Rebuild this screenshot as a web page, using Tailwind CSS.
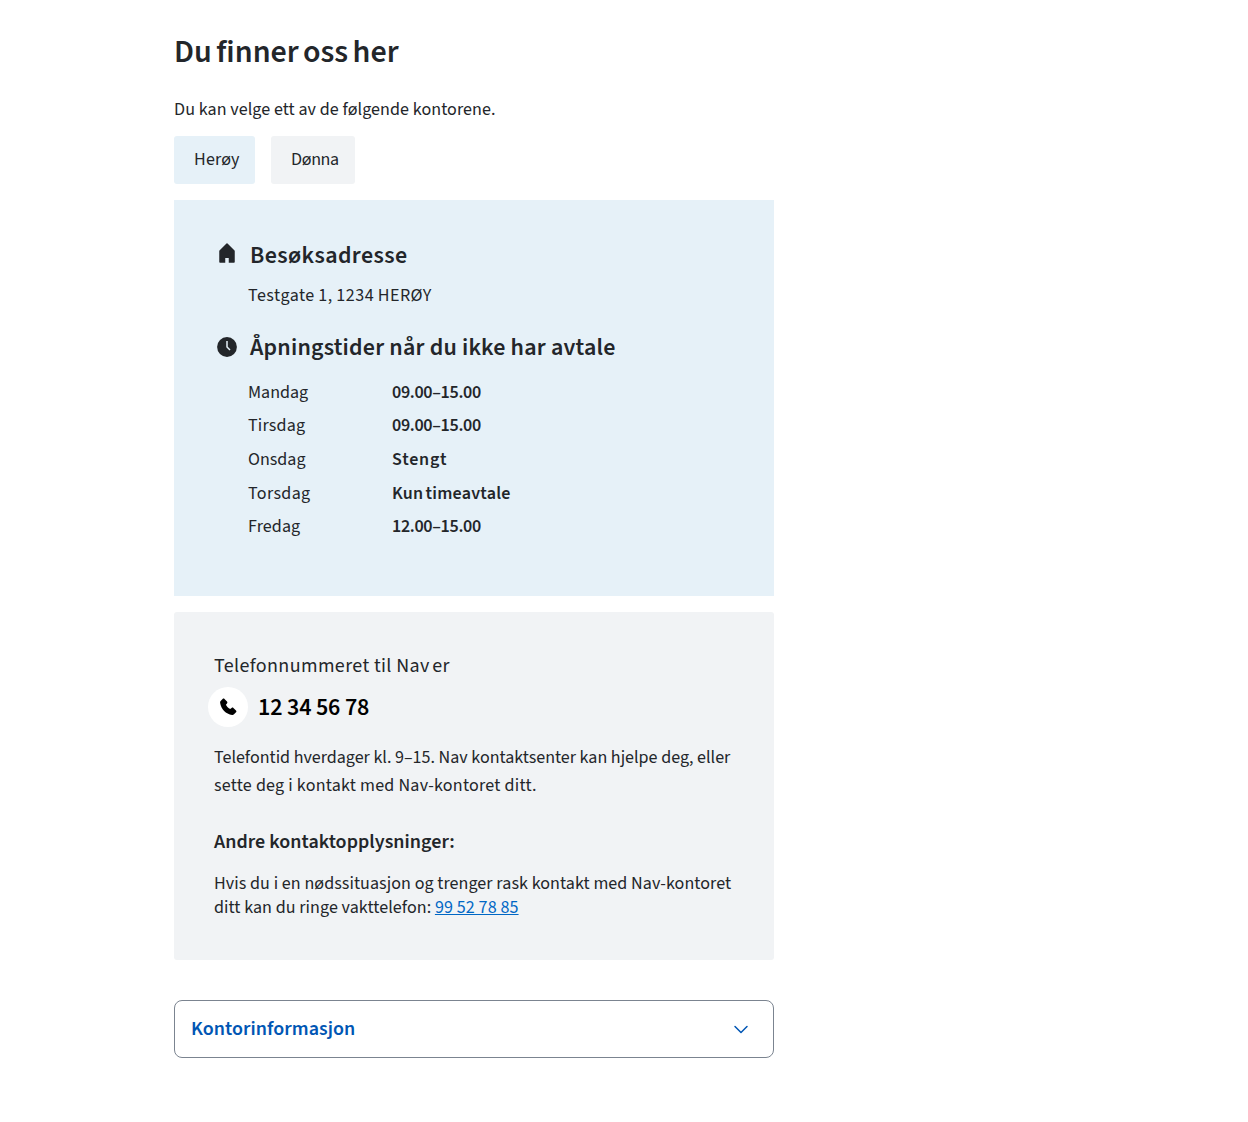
<!DOCTYPE html>
<html lang="no">
<head>
<meta charset="utf-8">
<title>Du finner oss her</title>
<script src="https://cdn.jsdelivr.net/npm/@tailwindcss/browser@4"></script>
</head>
<body class="bg-white text-[#23262a] font-['Source_Sans_3','Noto_Sans_CJK_SC',sans-serif] text-[18px] leading-6">
<main class="ml-[174px] w-[600px] pt-8">
  <h1 class="text-[32px] leading-10 font-semibold [word-spacing:-2px]">Du finner oss her</h1>
  <p class="mt-[26px] tracking-[0.08px]">Du kan velge ett av de følgende kontorene.</p>
  <div class="mt-[14px] flex gap-4">
    <button class="h-12 w-[81px] rounded-[3px] bg-[#e6f1f8] pl-5 text-left tracking-[0.15px]">Herøy</button>
    <button class="h-12 w-[84px] rounded-[3px] bg-[#f1f3f5] pl-5 text-left tracking-[-0.35px]">Dønna</button>
  </div>

  <section class="mt-4 h-[396px] bg-[#e6f1f8] px-10 pt-9">
    <h2 class="flex h-9 items-center text-[24px] font-semibold">
      <svg class="mx-px mr-[11px] -mt-0.5 size-6" viewBox="0 0 24 24" fill="currentColor"><path d="M12.53 2.47a.75.75 0 0 0-1.06 0l-7 7a.75.75 0 0 0-.22.53v11c0 .41.34.75.75.75h5.25V17h3.5v4.75H19c.41 0 .75-.34.75-.75V10a.75.75 0 0 0-.22-.53z"/></svg>
      <span class="pt-1 tracking-[0.38px]">Besøksadresse</span>
    </h2>
    <p class="mt-3 pl-[34px] tracking-[0.49px] [word-spacing:-0.5px]">Testgate 1, 1234 HERØY</p>
    <h2 class="mt-5 flex h-9 items-center text-[24px] font-semibold">
      <svg class="mx-px mr-[11px] mt-0.5 size-6" viewBox="0 0 24 24"><circle cx="12" cy="12" r="9.9" fill="currentColor"/><path d="M12 6v6l3 3" fill="none" stroke="#e6f1f8" stroke-width="1.5"/></svg>
      <span class="pt-1 tracking-[0.19px]">Åpningstider når du ikke har avtale</span>
    </h2>
    <dl class="mt-3 grid grid-cols-[144px_1fr] auto-rows-[33.6px] items-center pl-[34px] [&_dd]:font-semibold">
      <dt>Mandag</dt><dd class="tracking-[-0.32px]">09.00–15.00</dd>
      <dt class="tracking-[0.2px]">Tirsdag</dt><dd class="tracking-[-0.32px]">09.00–15.00</dd>
      <dt>Onsdag</dt><dd class="tracking-[0.8px]">Stengt</dd>
      <dt class="tracking-[0.35px]">Torsdag</dt><dd class="tracking-[0.22px] [word-spacing:-1.6px]">Kun timeavtale</dd>
      <dt class="tracking-[0.1px]">Fredag</dt><dd class="tracking-[-0.32px]">12.00–15.00</dd>
    </dl>
  </section>

  <section class="mt-4 h-[348px] rounded-[3px] bg-[#f1f3f5] px-10 pt-10">
    <p class="text-[20px] leading-7 tracking-[0.38px]">Telefonnummeret til Nav<span class="[word-spacing:-1.8px]"> er</span></p>
    <a class="-ml-1.5 mt-[7px] flex h-10 items-center gap-2.5 text-[24px] font-semibold text-black">
      <i class="grid size-10 place-items-center rounded-full bg-white"><svg class="size-6" viewBox="0 0 24 24" fill="currentColor"><path d="M4.600 5.900 6.600 3.900c.6-.5 1.300-.5 1.900 0l2.500 2.700c.5.500.5 1.200 0 1.800l-1.100 1.400c.9 1.900 2.400 3.400 4.300 4.300l1.400-1.200c.5-.5 1.300-.5 1.800 0l2.600 2.500c.5.500.5 1.300 0 1.800l-2 2.100c-.5.500-1.200.7-1.900.6C9.900 19 5 14.100 4.100 7.700c-.1-.7.100-1.300.5-1.800z"/></svg></i>
      <span class="pt-0.5 tracking-[-0.15px]">12 34 56 78</span>
    </a>
    <p class="mt-[17px] leading-7">Telefontid hverdager kl. 9–15. Nav kontaktsenter kan hjelpe deg, eller<br><span class="tracking-[0.25px]">sette deg i kontakt med Nav-kontoret ditt.</span></p>
    <h3 class="mt-7 text-[20px] leading-7 font-semibold tracking-[0.04px]">Andre kontaktopplysninger:</h3>
    <p class="mt-4 whitespace-nowrap tracking-[0.07px]">Hvis du i en nødssituasjon og trenger rask kontakt med Nav-kontoret<br>ditt kan du ringe vakttelefon: <a class="tracking-[0.12px] text-[#0067c5] underline">99 52 78 85</a></p>
  </section>

  <button class="mt-10 flex h-[58px] w-full items-center justify-between rounded-lg border border-[#7b8490] pl-4 pr-5 text-[20px] font-semibold text-[#0056b4]">
    <span class="tracking-[0.05px]">Kontorinformasjon</span>
    <svg class="size-6" viewBox="0 0 24 24" fill="none" stroke="currentColor" stroke-width="1.5" stroke-linecap="round" stroke-linejoin="round"><path d="M6 9.500l6 6 6-6"/></svg>
  </button>
</main>
</body>
</html>
